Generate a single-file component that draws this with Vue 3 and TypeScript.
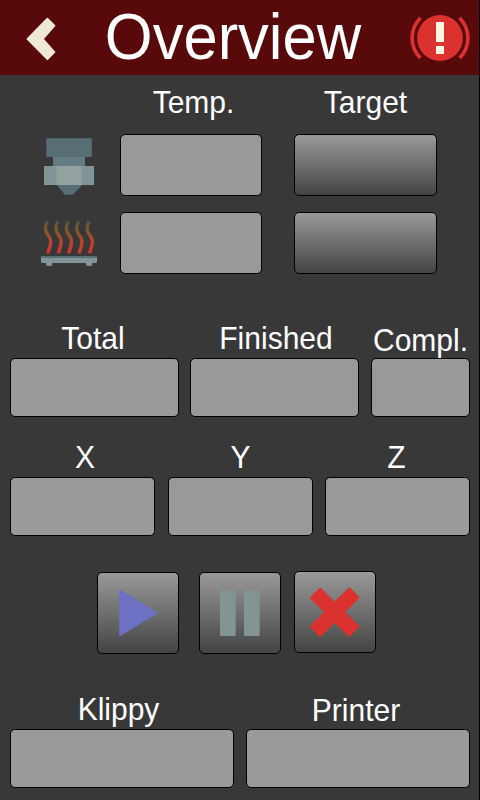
<script setup lang="ts">
interface Field {
  label: string
  name: string
}

const heaters = ['extruder', 'bed']
const progress: Field[] = [
  { label: 'Total', name: 'total' },
  { label: 'Finished', name: 'finished' },
  { label: 'Compl.', name: 'compl' },
]
const axes: Field[] = [
  { label: 'X', name: 'x' },
  { label: 'Y', name: 'y' },
  { label: 'Z', name: 'z' },
]
const status: Field[] = [
  { label: 'Klippy', name: 'klippy' },
  { label: 'Printer', name: 'printer' },
]
const waves = [0, 10.4, 20.8, 31.2, 41.6]
</script>

<template>
  <main class="screen">
    <header class="header">
      <svg class="back" viewBox="0 0 36 46">
        <path d="M5.6 23 25.4 2.7 32.4 9.6 20.9 23 32.4 36 25.4 43.2Z" />
      </svg>
      <h1 class="title"><span>Overview</span></h1>
      <svg class="alert" viewBox="0 0 60 50">
        <circle cx="30" cy="25" r="22.9" fill="#dc322f" />
        <path d="M10.4 5A28.3 28.3 0 0 0 10.4 45M49.6 5A28.3 28.3 0 0 1 49.6 45" fill="none" stroke="#dc322f" stroke-width="3.6" />
        <path d="M26 9h8v20h-8zM26 33h8v8h-8z" fill="#fdf6e3" />
      </svg>
    </header>

    <section class="temps">
      <span></span>
      <div class="label temp"><span>Temp.</span></div>
      <div class="label target"><span>Target</span></div>
      <template v-for="heater in heaters" :key="heater">
        <svg v-if="heater === 'extruder'" class="heater" viewBox="0 0 60 62">
          <rect x="6.3" y="4.2" width="45.6" height="18.8" rx="1" fill="#586e75" />
          <path d="M13 23h32v9H13z" fill="#657b83" />
          <path d="M17 51h25l-9.3 9.7h-8z" fill="#586e75" />
          <path d="M4 32h50v19H4z" fill="#839496" />
          <path d="M16.5 32h25v19h-25z" fill="#93a1a1" />
        </svg>
        <svg v-else class="heater" viewBox="0 0 60 62">
          <defs>
            <linearGradient id="heat" gradientUnits="userSpaceOnUse" x1="0" y1="8" x2="0" y2="42">
              <stop offset="0" stop-color="#4d4f47" />
              <stop offset=".3" stop-color="#7c5b2a" />
              <stop offset=".6" stop-color="#b0462c" />
              <stop offset="1" stop-color="#dc322f" />
            </linearGradient>
          </defs>
          <g fill="none" stroke="url(#heat)" stroke-width="3.4">
            <path
              v-for="dx in waves"
              :key="dx"
              :transform="`translate(${dx} 0)`"
              d="M7.6 9.2C5.4 13 4.8 17.2 6.6 20.8L9.8 25.6C12.2 30 10 35 7.8 41.2"
            />
          </g>
          <rect x="6" y="49" width="6.4" height="5" rx="2" fill="#839496" />
          <rect x="46" y="49" width="6.4" height="5" rx="2" fill="#839496" />
          <rect x="1" y="44" width="56" height="7" rx="1.5" fill="#839496" />
          <path d="M1.3 44h55.4v2H1.3z" fill="#586e75" />
        </svg>
        <div class="box"></div>
        <button class="box raised" type="button"></button>
      </template>
    </section>

    <section class="row progress">
      <div v-for="f in progress" :key="f.name" class="field">
        <div class="label" :class="f.name"><span>{{ f.label }}</span></div>
        <div class="box"></div>
      </div>
    </section>

    <section class="row axes">
      <div v-for="f in axes" :key="f.name" class="field">
        <div class="label" :class="f.name"><span>{{ f.label }}</span></div>
        <div class="box"></div>
      </div>
    </section>

    <section class="controls">
      <button class="box raised" type="button">
        <svg viewBox="0 0 80 80"><path d="M22 17.8 58.4 40 22 62.4Z" fill="#6c71c4" stroke="#6c71c4" stroke-width="1.6" stroke-linejoin="round" /></svg>
      </button>
      <button class="box raised" type="button">
        <svg viewBox="0 0 80 80" fill="#839496">
          <rect x="20" y="17.5" width="15.7" height="45.5" rx="1.3" />
          <rect x="44" y="17.5" width="15.7" height="45.5" rx="1.3" />
        </svg>
      </button>
      <button class="box raised cancel" type="button">
        <svg viewBox="0 0 80 80">
          <g fill="#dc322f">
            <rect x="11.7" y="32.7" width="56" height="15" rx="1.5" transform="rotate(45 39.7 40.2)" />
            <rect x="11.5" y="32.6" width="56.4" height="15" rx="1.5" transform="rotate(-45 39.7 40.1)" />
          </g>
        </svg>
      </button>
    </section>

    <section class="row status">
      <div v-for="f in status" :key="f.name" class="field">
        <div class="label" :class="f.name"><span>{{ f.label }}</span></div>
        <div class="box"></div>
      </div>
    </section>
  </main>
</template>

<style>
body {
  margin: 0;
  background: #000;
}
</style>

<style scoped>
* {
  box-sizing: border-box;
}
.screen {
  width: 479px;
  height: 800px;
  background: #383838;
  color: #fff;
  font-family: "Liberation Sans", Arial, sans-serif;
  overflow: hidden;
}
svg {
  display: block;
}
.header {
  width: 479px;
  height: 75px;
  display: grid;
  grid-template-columns: 36px 1fr 60px;
  align-items: start;
  padding: 0 9px 0 22px;
  background: #580a0a;
}
.back {
  width: 36px;
  height: 46px;
  margin-top: 16px;
  fill: #eee8d5;
  stroke: #eee8d5;
  stroke-width: 1.8;
  stroke-linejoin: round;
}
.alert {
  width: 60px;
  height: 50px;
  margin-top: 13px;
}
.title {
  margin: 0;
  padding-right: 2px;
  font-size: 61.5px;
  font-weight: 400;
  line-height: 75px;
  text-align: center;
  white-space: nowrap;
}
.title span,
.label span {
  display: inline-block;
  transform: scaleY(1.06);
  transform-origin: 50% 80%;
}
.label {
  height: 37px;
  font-size: 30px;
  line-height: 35px;
  text-align: center;
  white-space: nowrap;
}
.box {
  display: block;
  height: 59px;
  padding: 0;
  border: 1px solid #000;
  border-radius: 5px;
  background: #999;
}
.raised {
  background: linear-gradient(#999, #444);
}
.temps {
  height: 236px;
  display: grid;
  grid-template-columns: 80px 142px 32px 143px;
  grid-template-rows: 49px 62px 62px;
  padding: 10px 0 0 40px;
}
.temps .box {
  grid-column: 2;
  height: 62px;
}
.temps .raised,
.target {
  grid-column: 4;
}
.temps .heater ~ .heater,
.temps .heater ~ .heater ~ .box {
  margin-top: 16px;
}
.heater {
  grid-column: 1;
  width: 60px;
  height: 62px;
}
.temp {
  padding-left: 5px;
}
.row {
  display: grid;
  padding: 10px 9px 0 10px;
}
.progress {
  height: 119px;
  grid-template-columns: 169px 169px 99px;
  column-gap: 11px;
}
.progress .field:last-child {
  margin: 0 -1px 0 1px;
}
.axes {
  height: 119px;
  grid-template-columns: repeat(3, 145px);
  column-gap: 12.5px;
}
.status {
  grid-template-columns: 224px 224px;
  column-gap: 12px;
}
.total {
  padding-right: 3px;
}
.finished {
  padding-left: 3px;
}
.compl {
  padding-top: 2px;
}
.x {
  padding-left: 5px;
}
.y {
  padding-left: 1px;
}
.z {
  padding-right: 2px;
}
.klippy {
  padding-right: 7px;
}
.printer {
  padding-top: 1px;
  padding-right: 4px;
}
.controls {
  height: 133px;
  display: flex;
  gap: 20px;
  padding: 23px 0 0 97px;
}
.controls .box {
  width: 82px;
  height: 82px;
}
.controls .cancel {
  margin: -1px 0 0 -7px;
}
</style>
